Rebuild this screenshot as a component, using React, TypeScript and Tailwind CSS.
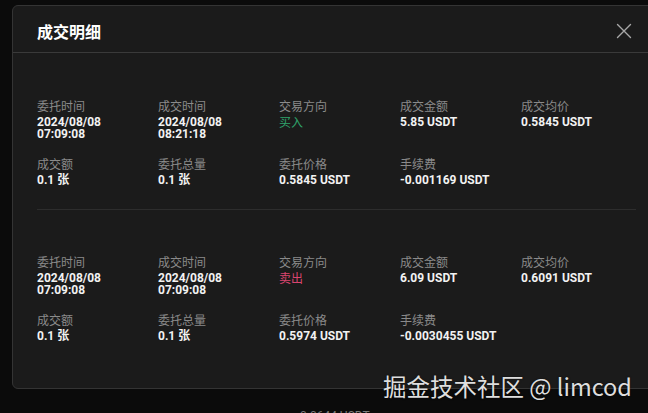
import React from "react";

type Field = { label: string; value: React.ReactNode; color?: string };

const font = { fontFamily: 'Roboto, "Noto Sans CJK SC", sans-serif' };

function Cell({ f }: { f: Field }) {
  return (
    <div className="flex flex-col">
      <div
        className="text-[12px] leading-[16px] text-[#8a8a8a]"
        style={{ fontFamily: '"Noto Sans CJK SC", sans-serif' }}
      >
        {f.label}
      </div>
      <div
        className={`mt-[2px] text-[12px] leading-[12px] font-bold ${f.color ?? "text-[#f2f2f2]"}`}
      >
        {f.value}
      </div>
    </div>
  );
}

function Block({ rows }: { rows: Field[][] }) {
  return (
    <div className="flex flex-col gap-[16px]">
      {rows.map((r, i) => (
        <div key={i} className="grid grid-cols-[121px_121px_121px_121px_121px]">
          {r.map((f, j) => (
            <Cell key={j} f={f} />
          ))}
        </div>
      ))}
    </div>
  );
}

export default function App() {
  const b1: Field[][] = [
    [
      { label: "委托时间", value: <>2024/08/08<br />07:09:08</> },
      { label: "成交时间", value: <>2024/08/08<br />08:21:18</> },
      { label: "交易方向", value: <span className="font-normal" style={{ fontFamily: '"Noto Sans CJK SC", sans-serif' }}>买入</span>, color: "text-[#2fa36b]" },
      { label: "成交金额", value: "5.85 USDT" },
      { label: "成交均价", value: "0.5845 USDT" },
    ],
    [
      { label: "成交额", value: "0.1 张" },
      { label: "委托总量", value: "0.1 张" },
      { label: "委托价格", value: "0.5845 USDT" },
      { label: "手续费", value: "-0.001169 USDT" },
    ],
  ];
  const b2: Field[][] = [
    [
      { label: "委托时间", value: <>2024/08/08<br />07:09:08</> },
      { label: "成交时间", value: <>2024/08/08<br />07:09:08</> },
      { label: "交易方向", value: <span className="font-normal" style={{ fontFamily: '"Noto Sans CJK SC", sans-serif' }}>卖出</span>, color: "text-[#d9456f]" },
      { label: "成交金额", value: "6.09 USDT" },
      { label: "成交均价", value: "0.6091 USDT" },
    ],
    [
      { label: "成交额", value: "0.1 张" },
      { label: "委托总量", value: "0.1 张" },
      { label: "委托价格", value: "0.5974 USDT" },
      { label: "手续费", value: "-0.0030455 USDT" },
    ],
  ];

  return (
    <div
      className="relative w-[648px] h-[413px] overflow-hidden bg-[#0b0b0b] pl-[12px] pt-[5px]"
      style={font}
    >
      <div className="w-[649px] h-[384px] rounded-[6px] border border-[#343434] bg-[#1b1b1b] flex flex-col">
        <div className="h-[47px] flex items-center justify-between pl-[24px] pr-[28px] border-b border-[#3a3a3a]">
          <div
            className="text-[16px] font-bold text-white leading-[20px] mt-[4px]"
            style={{ fontFamily: '"Noto Sans CJK SC", sans-serif' }}
          >
            成交明细
          </div>
          <svg width="16" height="16" viewBox="0 0 16 16" className="mt-[3px]">
            <path d="M1.5 1.5 L14.5 14.5 M14.5 1.5 L1.5 14.5" stroke="#a8a8a8" strokeWidth="1.4" strokeLinecap="round" />
          </svg>
        </div>
        <div className="px-[24px]">
          <div className="pt-[45px] pb-[23px] border-b border-[#2d2d2d]">
            <Block rows={b1} />
          </div>
          <div className="pt-[44px]">
            <Block rows={b2} />
          </div>
        </div>
      </div>
      <div className="pl-[288px] pt-[19px] text-[12px] leading-[16px] text-[#7a7a7a]">0.0644 USDT</div>
      <div
        className="absolute left-[383px] top-[373px] text-[23.5px] leading-[26px] text-[#dedede] whitespace-nowrap"
        style={{ fontFamily: '"Noto Sans CJK SC", sans-serif', textShadow: "0 0 2px rgba(0,0,0,0.6)" }}
      >
        掘金技术社区 @ limcod
      </div>
    </div>
  );
}
